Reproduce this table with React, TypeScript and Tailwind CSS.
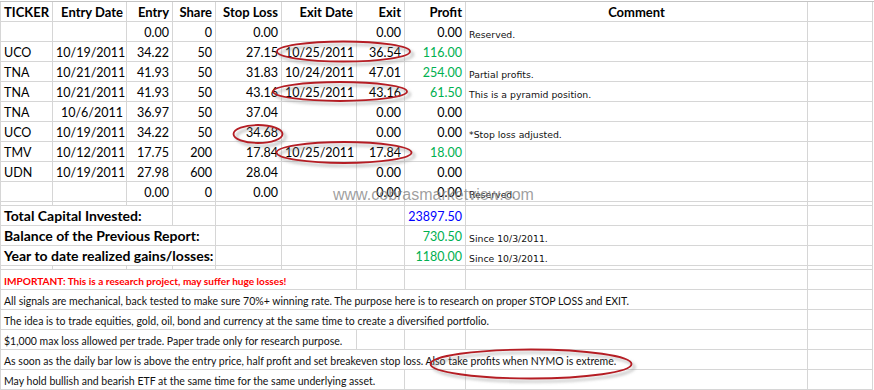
import React from 'react';

type Cell = { t?: string; span?: number; a?: 'l' | 'r' | 'c'; c?: string };

const SPAN: Record<number, string> = {
  1: 'col-span-1',
  2: 'col-span-2',
  3: 'col-span-3',
  4: 'col-span-4',
  5: 'col-span-5',
  6: 'col-span-6',
  7: 'col-span-7',
  8: 'col-span-8',
  9: 'col-span-9',
};

const ALIGN = { l: 'text-left', r: 'text-right', c: 'text-center' };

const calibri = "font-['Lato','Open_Sans',sans-serif]";
const tahoma = "font-['DejaVu_Sans','Liberation_Sans',sans-serif]";

const num = `${calibri} text-[12.5px] leading-[21px]`;
const note = `${tahoma} text-[9.3px] leading-[26px] text-[#111]`;
const green = 'text-[#00b050]';

function Row({ cells, thin }: { cells: Cell[]; thin?: boolean }) {
  return (
    <>
      {cells.map((cell, i) => (
        <div
          key={i}
          className={`${SPAN[cell.span ?? 1]} ${thin ? 'h-1' : 'h-5'} ${i === 0 ? 'border-l' : ''} border-r border-b border-[#d6d6d6] px-[3px] whitespace-nowrap overflow-visible ${ALIGN[cell.a ?? 'r']} ${cell.c ?? num}`}
        >
          {cell.t}
        </div>
      ))}
    </>
  );
}

const empty = (n: number): Cell[] => Array.from({ length: n }, () => ({}));

type Trade = [string, string, string, string, string, string, string, string, string, boolean?];

const trades: Trade[] = [
  ['', '', '0.00', '0', '0.00', '', '0.00', '0.00', 'Reserved.'],
  ['UCO', '10/19/2011', '34.22', '50', '27.15', '10/25/2011', '36.54', '116.00', '', true],
  ['TNA', '10/21/2011', '41.93', '50', '31.83', '10/24/2011', '47.01', '254.00', 'Partial profits.', true],
  ['TNA', '10/21/2011', '41.93', '50', '43.16', '10/25/2011', '43.16', '61.50', 'This is a pyramid position.', true],
  ['TNA', '10/6/2011', '36.97', '50', '37.04', '', '0.00', '0.00', ''],
  ['UCO', '10/19/2011', '34.22', '50', '34.68', '', '0.00', '0.00', '*Stop loss adjusted.'],
  ['TMV', '10/12/2011', '17.75', '200', '17.84', '10/25/2011', '17.84', '18.00', '', true],
  ['UDN', '10/19/2011', '27.98', '600', '28.04', '', '0.00', '0.00', ''],
  ['', '', '0.00', '0', '0.00', '', '0.00', '0.00', 'Reserved.'],
];

function tradeCells(r: Trade): Cell[] {
  return [
    { t: r[0], a: 'l' },
    { t: r[1] },
    { t: r[2] },
    { t: r[3] },
    { t: r[4] },
    { t: r[5] },
    { t: r[6] },
    { t: r[7], c: r[9] ? `${num} ${green}` : num },
    { t: r[8], a: 'l', c: note },
    {},
  ];
}

const head = `${calibri} text-[13px] leading-[21px] font-bold`;
const sum = `${calibri} text-[14px] leading-[20px] font-bold`;
const body = `${calibri} text-[10.5px] leading-[22px] text-[#111]`;

const ovals = [
  { cx: 343.5, cy: 51.5, rx: 66.5, ry: 10 },
  { cx: 340, cy: 91.5, rx: 67, ry: 9.5 },
  { cx: 258, cy: 134, rx: 24.5, ry: 9 },
  { cx: 344, cy: 152.5, rx: 67.5, ry: 10.5 },
  { cx: 531, cy: 364, rx: 100.5, ry: 14.5 },
];

export default function App() {
  return (
    <div className="relative w-[874px] h-[390px] overflow-hidden bg-white pt-px text-black">
      <div className="grid grid-cols-[53px_74px_46px_43px_66px_75px_48px_61px_342px_65px] border-t border-[#c4c4c4]">
        <Row
          cells={[
            { t: 'TICKER', a: 'l', c: head },
            { t: 'Entry Date', c: head },
            { t: 'Entry', c: head },
            { t: 'Share', c: head },
            { t: 'Stop Loss', c: head },
            { t: 'Exit Date', c: head },
            { t: 'Exit', c: head },
            { t: 'Profit', c: head },
            { t: 'Comment', a: 'c', c: head },
            {},
          ]}
        />
        {trades.map((r, i) => (
          <Row key={i} cells={tradeCells(r)} />
        ))}
        <Row thin cells={empty(10)} />
        <Row
          cells={[
            { t: 'Total Capital Invested:', span: 3, a: 'l', c: sum },
            {},
            {},
            {},
            {},
            { t: '23897.50', c: `${num} text-[#0000ff]` },
            {},
            {},
          ]}
        />
        <Row
          cells={[
            { t: 'Balance of the Previous Report:', span: 4, a: 'l', c: sum },
            {},
            {},
            {},
            { t: '730.50', c: `${num} ${green}` },
            { t: 'Since 10/3/2011.', a: 'l', c: note },
            {},
          ]}
        />
        <Row
          cells={[
            { t: 'Year to date realized gains/losses:', span: 4, a: 'l', c: sum },
            {},
            {},
            {},
            { t: '1180.00', c: `${num} ${green}` },
            { t: 'Since 10/3/2011.', a: 'l', c: note },
            {},
          ]}
        />
        <Row thin cells={empty(10)} />
        <Row
          cells={[
            {
              t: 'IMPORTANT: This is a research project, may suffer huge losses!',
              span: 6,
              a: 'l',
              c: `${calibri} text-[10.1px] leading-[22px] font-bold text-[#ff0000]`,
            },
            {},
            {},
            {},
            {},
          ]}
        />
        <Row
          cells={[
            {
              t: 'All signals are mechanical, back tested to make sure 70%+ winning rate. The purpose here is to research on proper STOP LOSS and EXIT.',
              span: 9,
              a: 'l',
              c: body,
            },
            {},
          ]}
        />
        <Row
          cells={[
            {
              t: 'The idea is to trade equities, gold, oil, bond and currency at the same time to create a diversified portfolio.',
              span: 9,
              a: 'l',
              c: body,
            },
            {},
          ]}
        />
        <Row
          cells={[
            { t: '$1,000 max loss allowed per trade. Paper trade only for research purpose.', span: 6, a: 'l', c: body },
            {},
            {},
            {},
            {},
          ]}
        />
        <Row
          cells={[
            {
              t: 'As soon as the daily bar low is above the entry price, half profit and set breakeven stop loss. Also take profits when NYMO is extreme.',
              span: 9,
              a: 'l',
              c: body,
            },
            {},
          ]}
        />
        <Row
          cells={[
            { t: 'May hold bullish and bearish ETF at the same time for the same underlying asset.', span: 7, a: 'l', c: body },
            {},
            {},
            {},
          ]}
        />
      </div>

      {/* watermark */}
      <div className="absolute left-[333px] top-[183px] font-['Liberation_Sans',Arial,sans-serif] text-[16px] tracking-[0px] text-[#808080]/75 pointer-events-none">
        www.cobrasmarketview.com
      </div>

      {/* hand-drawn ovals */}
      <svg className="absolute inset-0 pointer-events-none" width="874" height="390" viewBox="0 0 874 390">
        <defs>
          <filter id="sh" x="-20%" y="-50%" width="140%" height="200%">
            <feGaussianBlur stdDeviation="1.4" />
          </filter>
        </defs>
        {ovals.map((o, i) => (
          <g key={i}>
            <ellipse
              cx={o.cx + 3}
              cy={o.cy + 3}
              rx={o.rx}
              ry={o.ry}
              fill="none"
              stroke="#8a8a8a"
              strokeOpacity="0.55"
              strokeWidth="2.2"
              filter="url(#sh)"
            />
            <ellipse cx={o.cx} cy={o.cy} rx={o.rx} ry={o.ry} fill="none" stroke="#b51d24" strokeWidth="1.8" />
          </g>
        ))}
      </svg>
    </div>
  );
}
